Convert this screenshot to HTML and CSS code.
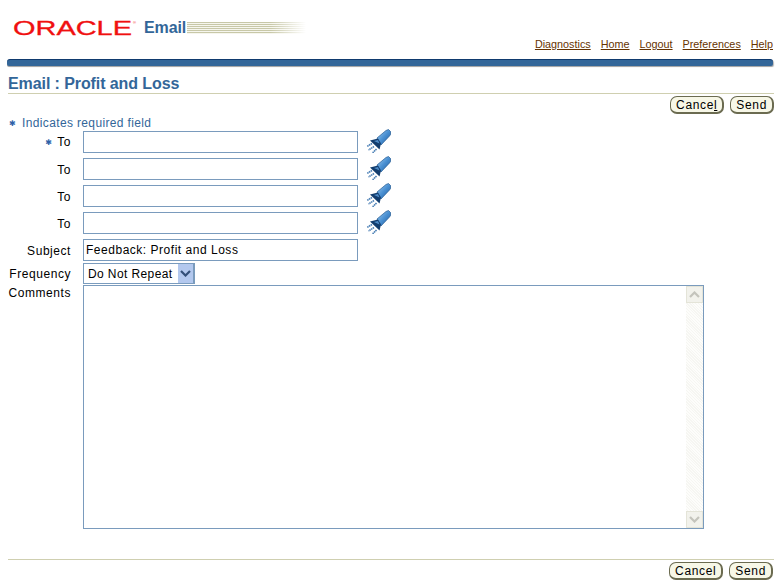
FILE: index.html
```html
<!DOCTYPE html>
<html lang="en">
<head>
<meta charset="utf-8">
<title>Email : Profit and Loss</title>
<link rel="stylesheet" href="styles.css">
</head>
<body>
<svg class="defs" width="0" height="0" aria-hidden="true">
  <defs>
    <linearGradient id="beam" x1="0" y1="0" x2="1" y2="1">
      <stop offset="0" stop-color="#a6d0f2"/>
      <stop offset=".5" stop-color="#4a90d2"/>
      <stop offset="1" stop-color="#1f5a9c"/>
    </linearGradient>
    <symbol id="torch" viewBox="0 0 26 24">
      <path d="M12 9 21 1.5 23.5.5 25.5 2.5 25.5 5.5 24.5 7 16 16z" fill="url(#beam)" stroke="#235a94" stroke-width=".7"/>
      <path d="M5 11.5 13 9.5 16 14.5 14.5 20.5z" fill="#123d6e"/>
      <path d="M9 12 13 11 14.5 14.5z" fill="#4f8cc8"/>
      <path d="M7 14.5 2 17.5M9 17.5 3.5 21M11.5 20 7.5 24" stroke="#4a7fb5" stroke-width="1.6" stroke-dasharray="1.5 .5" fill="none"/>
    </symbol>
  </defs>
</svg>
<header class="masthead">
  <div class="brand">
    <svg class="logo" width="124" height="18" viewBox="0 0 124 18" role="img" aria-label="Oracle">
      <text x="0" y="15.5" textLength="119" lengthAdjust="spacingAndGlyphs" class="logo-text">ORACLE</text>
      <text x="120" y="5" class="logo-mark">®</text>
    </svg>
    <span class="product">Email</span>
    <span class="stripes"></span>
  </div>
  <nav class="links">
    <a href="#">Diagnostics</a>
    <a href="#">Home</a>
    <a href="#">Logout</a>
    <a href="#">Preferences</a>
    <a href="#">Help</a>
  </nav>
</header>
<div class="bar"></div>
<main class="content">
  <h1 class="title">Email : Profit and Loss</h1>
  <div class="actions actions-top">
    <button class="btn" type="button">Cance<u>l</u></button>
    <button class="btn" type="button">Send</button>
  </div>
  <p class="required"><span class="star star-lead">✱</span>Indicates required field</p>
  <form class="form">
    <label class="label label-to"><span class="star star-inline">✱</span>To</label>
    <div class="recipient"><input class="field" type="text"><svg class="torch" width="26" height="24"><use href="#torch"/></svg></div>
    <label class="label label-to">To</label>
    <div class="recipient"><input class="field" type="text"><svg class="torch" width="26" height="24"><use href="#torch"/></svg></div>
    <label class="label label-to">To</label>
    <div class="recipient"><input class="field" type="text"><svg class="torch" width="26" height="24"><use href="#torch"/></svg></div>
    <label class="label label-to">To</label>
    <div class="recipient"><input class="field" type="text"><svg class="torch" width="26" height="24"><use href="#torch"/></svg></div>
    <label class="label label-to">Subject</label>
    <div class="recipient"><input class="field" type="text" value="Feedback: Profit and Loss"></div>
    <label class="label label-tight">Frequency</label>
    <div class="select">
      <select class="select-input"><option>Do Not Repeat</option></select>
      <span class="select-arrow"><svg width="11" height="7" viewBox="0 0 11 7"><path d="M1 1l4.5 4.5L10 1" fill="none" stroke="#334f78" stroke-width="2.2"/></svg></span>
    </div>
    <label class="label label-top">Comments</label>
    <div class="comments">
      <textarea class="comments-input"></textarea>
      <div class="scrollbar">
        <span class="scroll-btn"><svg width="11" height="7" viewBox="0 0 11 7"><path d="M1 6l4.5-4.5L10 6" fill="none" stroke="#c4c4bc" stroke-width="2.2"/></svg></span>
        <span class="scroll-track"></span>
        <span class="scroll-btn"><svg width="11" height="7" viewBox="0 0 11 7"><path d="M1 1l4.5 4.5L10 1" fill="none" stroke="#c4c4bc" stroke-width="2.2"/></svg></span>
      </div>
    </div>
  </form>
  <div class="actions actions-bottom">
    <button class="btn" type="button">Cancel</button>
    <button class="btn" type="button">Send</button>
  </div>
</main>
</body>
</html>
```

FILE: styles.css
```css
* { box-sizing: border-box; }
html, body { margin: 0; padding: 0; }
body {
  width: 779px;
  height: 584px;
  overflow: hidden;
  background: #fff;
  color: #000;
  font: 12px "Liberation Sans", Arial, sans-serif;
  letter-spacing: .4px;
}
.defs { position: absolute; }
.masthead {
  height: 59px;
  padding: 0 6px 0 13px;
  display: flex;
  justify-content: space-between;
  align-items: flex-start;
}
.brand {
  display: flex;
  align-items: center;
  padding-top: 19px;
}
.logo { display: block; overflow: visible; }
.logo-text {
  font: 19.5px "Liberation Sans", Arial, sans-serif;
  letter-spacing: 0;
  fill: #f01010;
  stroke: #f01010;
  stroke-width: .3px;
}
.logo-mark {
  font: 4px "Liberation Sans", Arial, sans-serif;
  letter-spacing: 0;
  fill: #f01010;
}
.product {
  margin-left: 7px;
  font-size: 16px;
  font-weight: 700;
  letter-spacing: -.1px;
  color: #336699;
}
.stripes {
  width: 119px;
  height: 12px;
  margin-left: 1px;
  background:
    linear-gradient(to right, rgba(255,255,255,0) 70%, #fff 100%),
    repeating-linear-gradient(to bottom, #c8c8a8 0 1px, #f6f6ee 1px 2px);
}
.links {
  display: flex;
  gap: 10px;
  padding-top: 38px;
  font-size: 10.8px;
  letter-spacing: 0;
  line-height: 13px;
}
.links a { color: #663300; }
.bar {
  height: 7px;
  margin: 0 6px 0 7px;
  background: #336699;
  border-top: 1px solid #0f3a6e;
  border-radius: 3px 3px 2px 2px;
  box-shadow: 0 1px 0 #a8a8a8, 1px 1px 1px #b8b8b8;
}
.content { padding: 8px 5px 0 8px; }
.title {
  margin: 0;
  height: 20px;
  font-size: 16px;
  line-height: 19px;
  letter-spacing: -.09px;
  color: #336699;
  border-bottom: 1px solid #cfcfb0;
}
.actions {
  display: flex;
  justify-content: flex-end;
  gap: 6px;
}
.actions-top { margin-top: 2px; height: 18px; }
.actions-bottom {
  margin-top: 30px;
  padding-top: 2px;
  padding-right: 1px;
  border-top: 1px solid #cfcfb0;
}
.btn {
  height: 18px;
  padding: 0 5px;
  background: #f7f7e7;
  border: 1px solid #6b6b50;
  border-right-width: 2px;
  border-bottom-width: 2px;
  border-radius: 7px;
  font: inherit;
  letter-spacing: .65px;
  line-height: 14px;
  color: #000;
}
.btn u { text-decoration: underline; }
.required {
  margin: 1px 0 0 0;
  height: 16px;
  line-height: 16px;
  color: #336699;
  letter-spacing: .36px;
}
.star {
  color: #2f62a8;
  font-family: "DejaVu Sans", sans-serif;
  font-size: 8px;
  letter-spacing: 0;
  vertical-align: 1px;
}
.star-lead { display: inline-block; width: 14px; padding-left: 1px; }
.star-inline { display: inline-block; width: 11px; margin-right: 1px; text-align: left; }
.form {
  display: grid;
  grid-template-columns: 63px 1fr;
  column-gap: 12px;
  row-gap: 5px;
  align-items: center;
}
.label { text-align: right; line-height: 14px; letter-spacing: .55px; }
.label-to { margin-top: 1px; }
.recipient {
  display: flex;
  align-items: center;
  gap: 7px;
  height: 22px;
}
.field {
  width: 275px;
  height: 22px;
  padding: 0 2px;
  background: #fff;
  border: 1px solid #7a9bbd;
  border-radius: 0;
  font: inherit;
  letter-spacing: .52px;
  color: #000;
}
.torch { display: block; margin: -3px 0 0 0; }
.select {
  display: flex;
  width: 112px;
  height: 21px;
  margin-top: -3px;
  border: 1px solid #7a9bbd;
  border-width: 1px 2px 1px 1px;
}
.select-input {
  appearance: none;
  flex: 1;
  min-width: 0;
  padding: 0 4px;
  background: #fff;
  border: 0;
  border-radius: 0;
  font: inherit;
  letter-spacing: inherit;
  color: #000;
}
.select-arrow {
  flex: none;
  display: flex;
  align-items: center;
  justify-content: center;
  width: 15px;
  background: #b3c8ee;
}
.label-tight { margin-top: -3px; }
.label-top { align-self: start; margin-top: -3px; }
.comments {
  display: flex;
  width: 621px;
  height: 244px;
  margin-top: -4px;
  background: #fff;
  border: 1px solid #7a9bbd;
}
.comments-input {
  flex: 1;
  min-width: 0;
  padding: 2px;
  border: 0;
  outline: 0;
  resize: none;
  font: inherit;
}
.scrollbar {
  flex: none;
  display: flex;
  flex-direction: column;
  width: 17px;
}
.scroll-btn {
  flex: none;
  display: flex;
  align-items: center;
  justify-content: center;
  height: 17px;
  background: #f2f2ec;
  border: 1px solid #e4e4d8;
}
.scroll-track {
  flex: 1;
  background: repeating-linear-gradient(45deg, #fdfdfb 0 1px, #f6f6f2 1px 2px);
}
```
